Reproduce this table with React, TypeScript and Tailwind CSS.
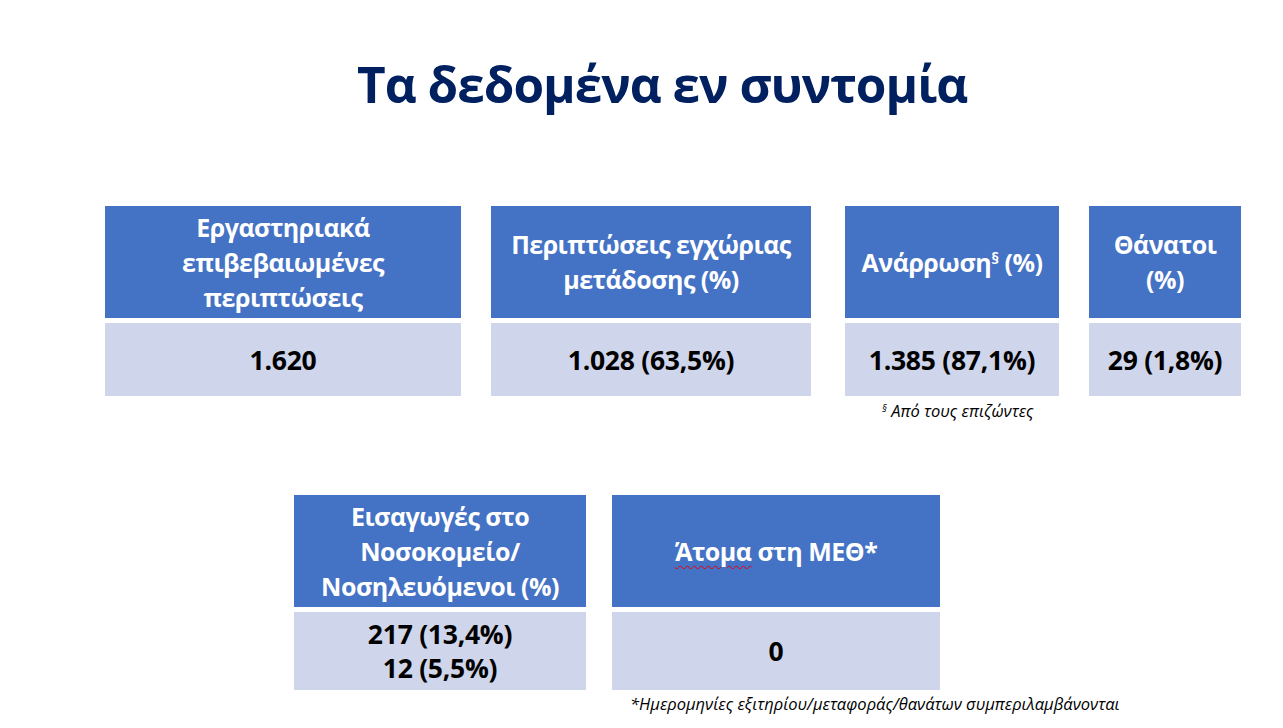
const font = { fontFamily: '"Open Sans", "Noto Sans", sans-serif' };

type Stat = {
  title: React.ReactNode;
  value: React.ReactNode;
  width: string;
};

const StatCard = ({ title, value, width, valueH }: Stat & { valueH: string }) => (
  <div className={`flex flex-col gap-[5px] ${width}`}>
    <div className="flex h-[112px] items-center justify-center bg-[#4472c4] text-center text-[25px] font-bold leading-[35px] tracking-[-0.02em] text-white">
      <div className="whitespace-nowrap">{title}</div>
    </div>
    <div
      className={`flex ${valueH} items-center justify-center bg-[#cfd5ea] text-center text-[26.5px] font-bold leading-[34px] tracking-[-0.01em] text-black`}
    >
      <div>{value}</div>
    </div>
  </div>
);

export default function App() {
  return (
    <div className="relative h-[728px] w-[1283px] overflow-hidden bg-white" style={font}>
      <h1 className="pl-[357px] pt-[52px] text-[49.5px] font-bold leading-[64px] tracking-[-0.02em] text-[#002060]">
        Τα δεδομένα εν συντομία
      </h1>

      <div className="mt-[90px] flex pl-[105px]">
        <StatCard
          width="w-[356px]"
          valueH="h-[73px]"
          title={
            <>
              Εργαστηριακά
              <br />
              επιβεβαιωμένες
              <br />
              περιπτώσεις
            </>
          }
          value="1.620"
        />
        <div className="ml-[30px]">
          <StatCard
            width="w-[320px]"
            valueH="h-[73px]"
            title={
              <>
                Περιπτώσεις εγχώριας
                <br />
                μετάδοσης (%)
              </>
            }
            value="1.028 (63,5%)"
          />
        </div>
        <div className="ml-[34px] flex flex-col">
          <StatCard
            width="w-[214px]"
            valueH="h-[73px]"
            title={
              <>
                Ανάρρωση<sup className="text-[16px]">§</sup> (%)
              </>
            }
            value="1.385 (87,1%)"
          />
          <p className="mt-[5px] pl-[37px] text-[16.5px] italic leading-[20px] text-black">
            <sup className="text-[10px]">§</sup> Από τους επιζώντες
          </p>
        </div>
        <div className="ml-[30px]">
          <StatCard
            width="w-[152px]"
            valueH="h-[73px]"
            title={
              <>
                Θάνατοι
                <br />
                (%)
              </>
            }
            value="29 (1,8%)"
          />
        </div>
      </div>

      <div className="mt-[74px] flex pl-[294px]">
        <StatCard
          width="w-[292px]"
          valueH="h-[78px]"
          title={
            <>
              Εισαγωγές στο
              <br />
              Νοσοκομείο/
              <br />
              Νοσηλευόμενοι (%)
            </>
          }
          value={
            <>
              217 (13,4%)
              <br />
              12 (5,5%)
            </>
          }
        />
        <div className="ml-[26px] flex flex-col">
          <StatCard
            width="w-[328px]"
            valueH="h-[78px]"
            title={
              <>
                <span className="underline decoration-red-600 decoration-wavy decoration-1 underline-offset-4">
                  Άτομα
                </span>{" "}
                στη ΜΕΘ*
              </>
            }
            value="0"
          />
          <p className="mt-[4px] whitespace-nowrap pl-[18px] text-[16.5px] italic leading-[20px] text-black">
            *Ημερομηνίες εξιτηρίου/μεταφοράς/θανάτων συμπεριλαμβάνονται
          </p>
        </div>
      </div>
    </div>
  );
}
